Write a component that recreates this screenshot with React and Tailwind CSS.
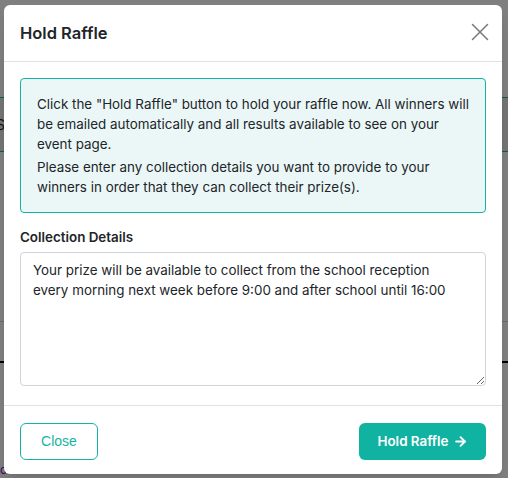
import React from "react";
import { X, ArrowRight } from "lucide-react";

export default function App() {
  const font = { fontFamily: "Inter, 'Noto Sans', sans-serif" };

  return (
    <div className="relative w-[508px] h-[478px] overflow-hidden bg-white" style={font}>
      {/* Page behind the overlay */}
      <div className="flex flex-col h-full">
        <div className="h-[97px]" />
        <div className="h-[55px] border-y border-[#14b8a6] bg-[#e8e8e8] flex items-center px-0">
          <span className="text-sm text-gray-800 -ml-[4px]">S</span>
        </div>
        <div className="h-[170px] border-b border-gray-300" />
        <div className="h-[41px] border-b-2 border-black" />
        <div className="flex-1 flex items-end">
          <span className="text-xs text-purple-800">o</span>
        </div>
      </div>

      {/* Overlay */}
      <div className="absolute inset-0 bg-black/50" />

      {/* Modal */}
      <div className="absolute left-[4px] top-[5px] w-[498px] h-[469px] bg-white rounded-[6px] shadow-lg flex flex-col">
        <div className="h-[57px] flex items-center justify-between pl-4 pr-[7px] border-b border-[#dee2e6]">
          <h2 className="text-[16.5px] font-semibold text-[#212529] mt-[1px]">Hold Raffle</h2>
          <X size={30} strokeWidth={1.2} className="text-[#7a7a7a] -mt-[2px]" />
        </div>

        <div className="flex-1 px-4 pt-4">
          <div className="bg-[#ebf7f7] border border-[#14b3a3] rounded-[4px] px-4 pt-[15px] pb-[15px] text-[13.4px] leading-[20px] text-[#212529] flex flex-col gap-[3px]">
            <p>
              Click the "Hold Raffle" button to hold your raffle now. All winners will be emailed
              automatically and all results available to see on your event page.
            </p>
            <p>
              Please enter any collection details you want to provide to your winners in order that
              they can collect their prize(s).
            </p>
          </div>

          <label className="block mt-[14px] mb-[5px] text-[13.4px] font-semibold text-[#212529] leading-[20px]">
            Collection Details
          </label>
          <textarea
            className="block w-full h-[134px] border border-[#ced4da] rounded-[4px] pl-3 pr-[30px] py-[7px] text-[13.4px] leading-[20px] text-[#212529] resize-y outline-none"
            style={font}
            defaultValue="Your prize will be available to collect from the school reception every morning next week before 9:00 and after school until 16:00"
          />
        </div>

        <div className="h-[69px] border-t border-[#dee2e6] flex items-center justify-between px-4 pt-[3px]">
          <button
            className="h-[37px] w-[78px] border border-[#14b3a3] rounded-[6px] text-[#14b3a3] text-[14px]"
            style={{ fontFamily: "'Liberation Sans', Arial, sans-serif" }}
          >
            Close
          </button>
          <button className="h-[37px] w-[127px] bg-[#10b3a1] rounded-[6px] text-white text-[13.4px] font-semibold flex items-center justify-center gap-[4px]">
            Hold Raffle
            <ArrowRight size={15} strokeWidth={3} />
          </button>
        </div>
      </div>
    </div>
  );
}
